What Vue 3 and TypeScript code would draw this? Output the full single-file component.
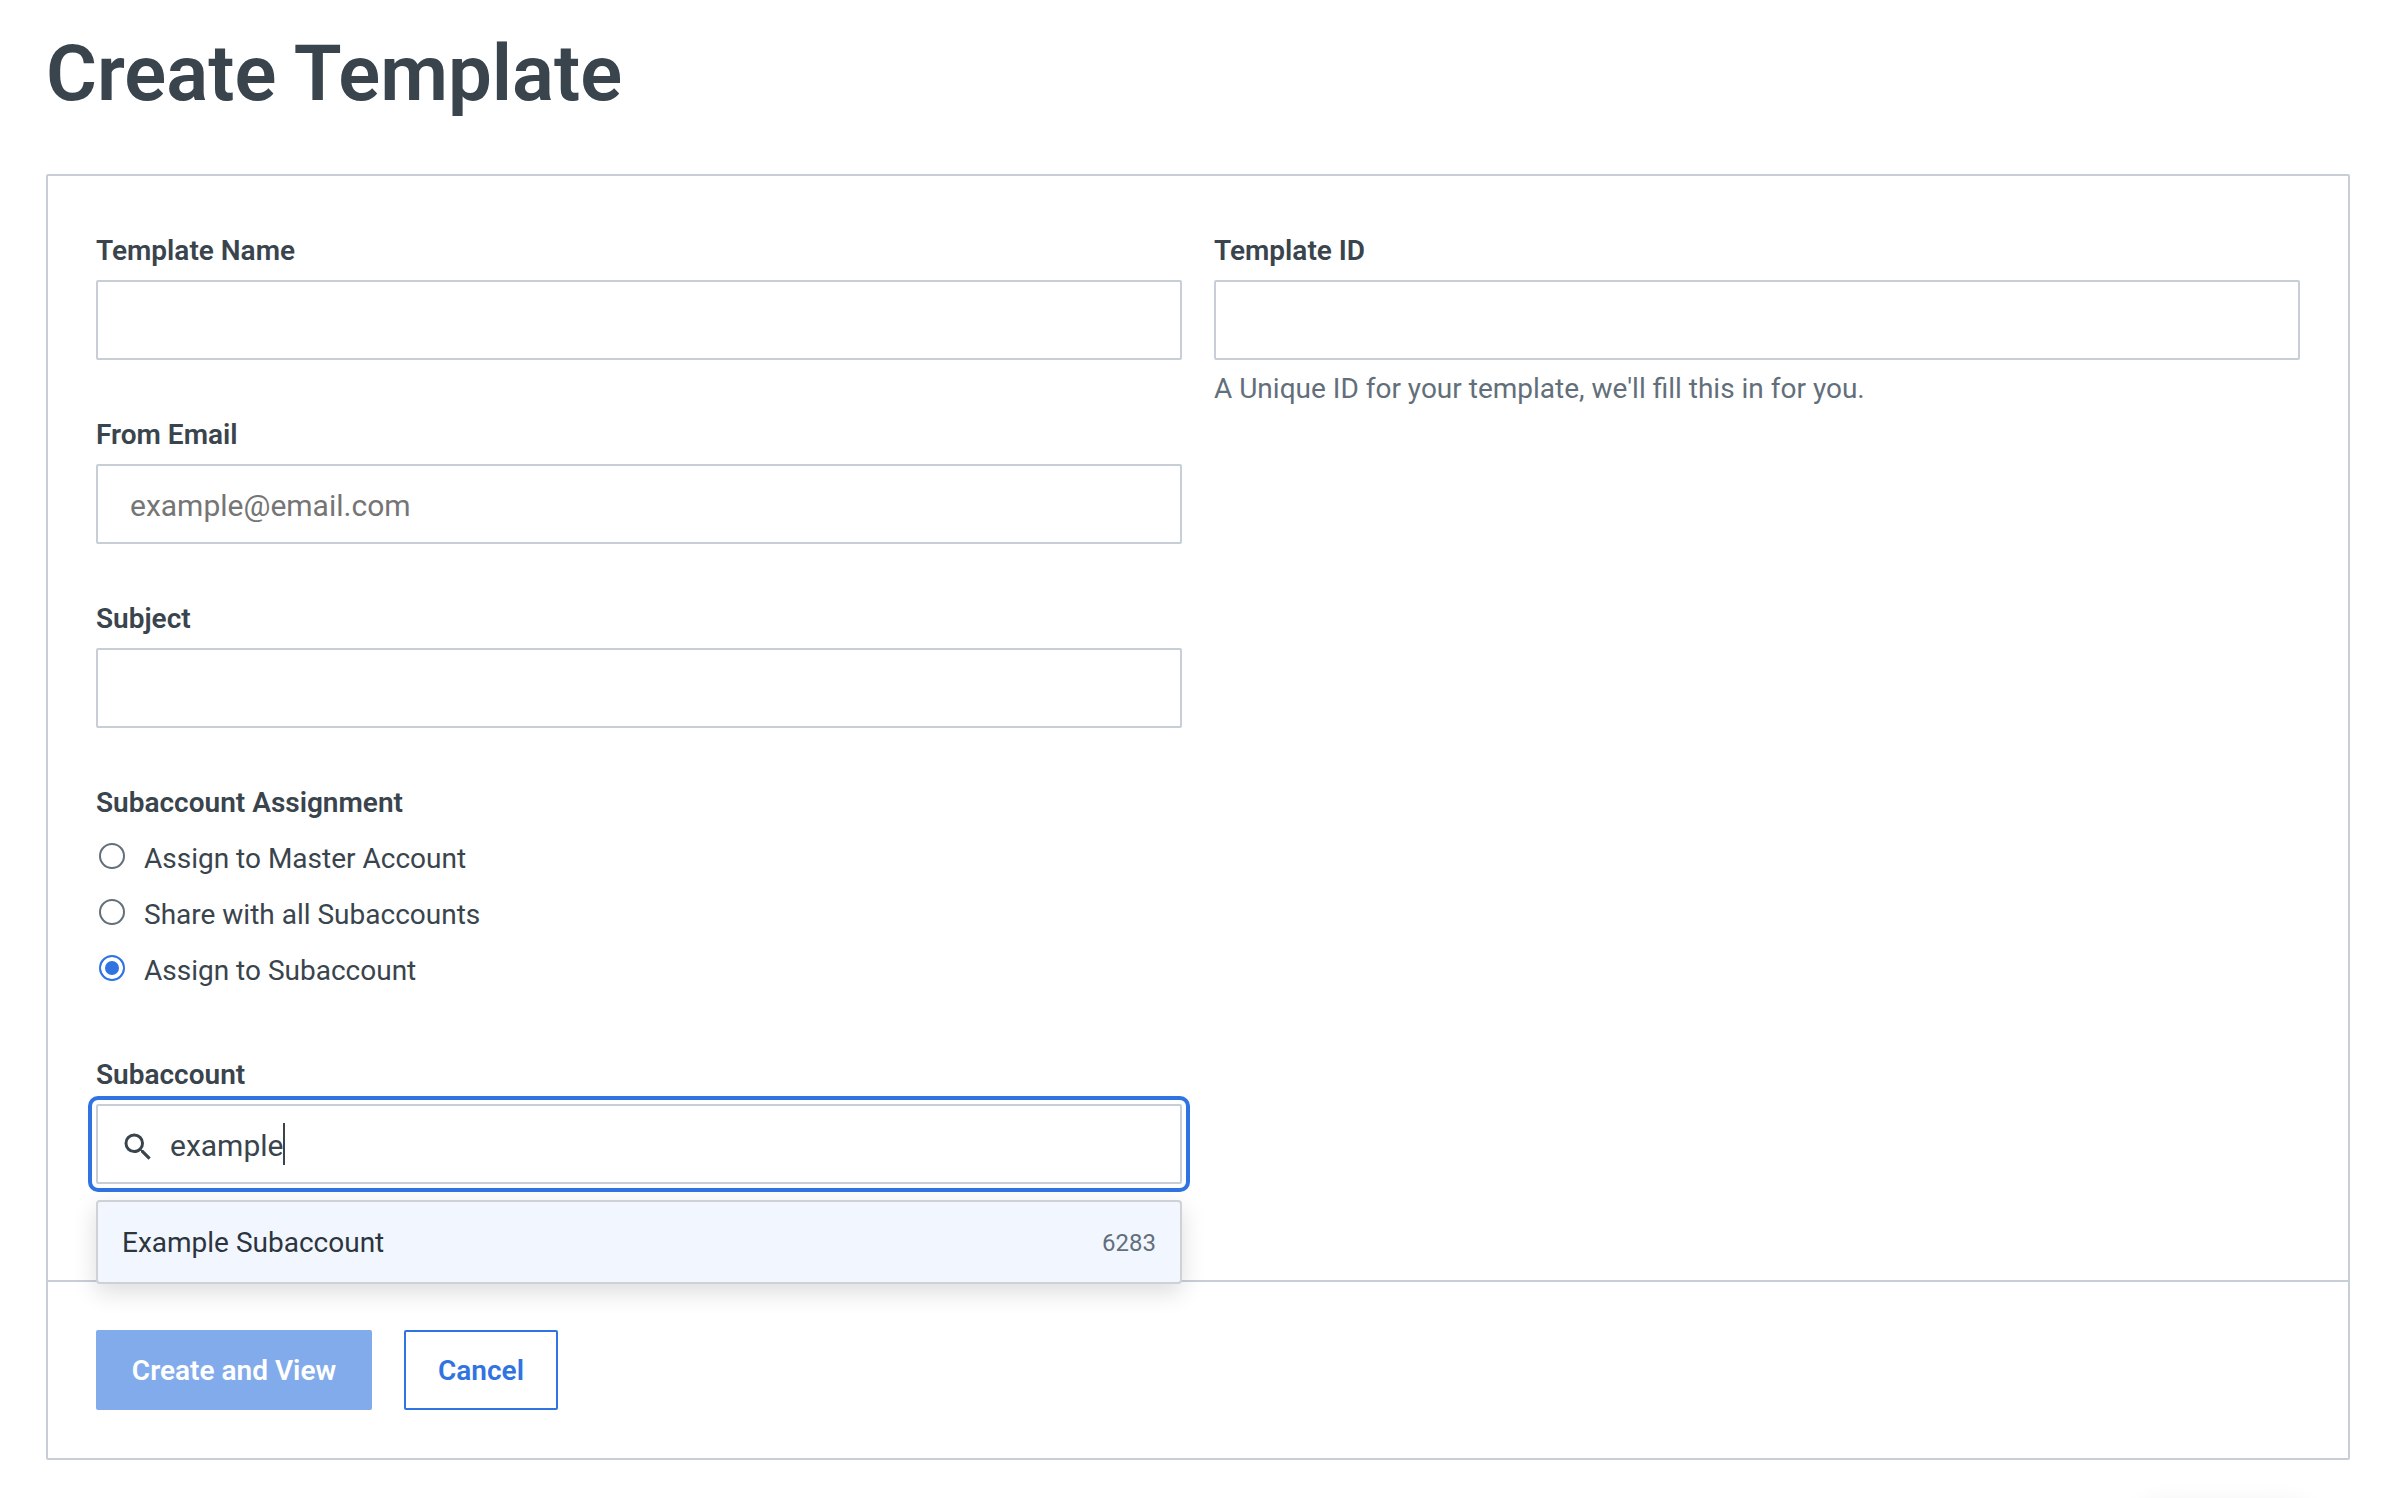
<script setup lang="ts">
import { computed, ref } from 'vue'

interface Assignment {
  value: string
  label: string
}

interface Subaccount {
  id: number
  name: string
}

const assignments: Assignment[] = [
  { value: 'master', label: 'Assign to Master Account' },
  { value: 'shared', label: 'Share with all Subaccounts' },
  { value: 'subaccount', label: 'Assign to Subaccount' },
]

const subaccounts: Subaccount[] = [{ id: 6283, name: 'Example Subaccount' }]

const name = ref('')
const templateId = ref('')
const fromEmail = ref('')
const subject = ref('')
const assignment = ref('subaccount')
const query = ref('example')

const matches = computed(() =>
  subaccounts.filter((s) => s.name.toLowerCase().includes(query.value.toLowerCase())),
)
const canSubmit = computed(() => name.value !== '' && fromEmail.value !== '' && subject.value !== '')
</script>

<template>
  <main class="page">
    <h1 class="title">Create Template</h1>

    <form class="card" @submit.prevent>
      <div class="fields">
        <div class="column">
          <div class="field">
            <label class="label" for="name">Template Name</label>
            <input id="name" v-model="name" class="control" type="text" />
          </div>

          <div class="field">
            <label class="label" for="from">From Email</label>
            <input id="from" v-model="fromEmail" class="control" type="email" placeholder="example@email.com" />
          </div>

          <div class="field">
            <label class="label" for="subject">Subject</label>
            <input id="subject" v-model="subject" class="control" type="text" />
          </div>

          <fieldset class="group">
            <legend class="label">Subaccount Assignment</legend>
            <div class="options">
              <label v-for="a in assignments" :key="a.value" class="option">
                <input v-model="assignment" class="radio" type="radio" name="assignment" :value="a.value" />
                <span>{{ a.label }}</span>
              </label>
            </div>
          </fieldset>

          <div class="field typeahead">
            <label class="label" for="subaccount">Subaccount</label>
            <div class="search">
              <svg class="search-icon" viewBox="0 0 24 24" aria-hidden="true">
                <path
                  fill="currentColor"
                  d="M15.5 14h-.79l-.28-.27A6.47 6.47 0 0 0 16 9.5 6.5 6.5 0 1 0 9.5 16c1.61 0 3.09-.59 4.23-1.57l.27.28v.79l5 4.99L20.49 19l-4.99-5zm-6 0C7.01 14 5 11.99 5 9.5S7.01 5 9.5 5 14 7.01 14 9.5 11.99 14 9.5 14z"
                />
              </svg>
              <input id="subaccount" v-model="query" class="search-input" type="text" autocomplete="off" />
              <span class="caret" aria-hidden="true"></span>
            </div>
            <ul class="menu">
              <li v-for="s in matches" :key="s.id">
                <button class="menu-item" type="button">
                  <span>{{ s.name }}</span>
                  <span class="menu-id">{{ s.id }}</span>
                </button>
              </li>
            </ul>
          </div>
        </div>

        <div class="column">
          <div class="field">
            <label class="label" for="template-id">Template ID</label>
            <input id="template-id" v-model="templateId" class="control" type="text" aria-describedby="id-help" />
            <p id="id-help" class="help">A Unique ID for your template, we'll fill this in for you.</p>
          </div>
        </div>
      </div>

      <div class="actions">
        <button class="button primary" type="submit" :disabled="!canSubmit">Create and View</button>
        <button class="button outline" type="button">Cancel</button>
      </div>
    </form>

    <div class="dock" aria-hidden="true"></div>
  </main>
</template>

<style>
body {
  background: #fff;
}
</style>

<style scoped>
.page {
  padding: 34px 46px 0;
  color: #39444d;
  font-family: Roboto, "Liberation Sans", sans-serif;
  font-size: 28px;
  line-height: 30px;
}

.page * {
  box-sizing: border-box;
}

.title {
  margin: 0 0 60px;
  font-size: 78px;
  line-height: 80px;
  font-weight: 600;
}

.card {
  border: 2px solid #c8ced8;
  border-radius: 2px;
}

.fields {
  display: grid;
  grid-template-columns: 1fr 1fr;
  gap: 32px;
  padding: 60px 48px 96px;
}

.column {
  display: flex;
  flex-direction: column;
  gap: 60px;
}

.field {
  display: flex;
  flex-direction: column;
}

.label {
  margin-bottom: 14px;
  padding: 0;
  font-weight: 600;
}

.control {
  width: 100%;
  height: 80px;
  padding: 2px 32px 0;
  border: 2px solid #c8ced8;
  border-radius: 2px;
  outline: none;
  background: #fff;
  color: inherit;
  font: inherit;
  font-size: 30px;
}

.control::placeholder {
  color: #757575;
  opacity: 1;
}

.help {
  margin: 14px 0 0;
  color: #626f7a;
}

.group {
  margin: 0;
  padding: 0;
  border: 0;
}

.options {
  display: flex;
  flex-direction: column;
  gap: 22px;
  padding: 10px 0 12px;
}

.option {
  display: flex;
  align-items: flex-start;
  gap: 16px;
  line-height: 34px;
}

.radio {
  appearance: none;
  width: 26px;
  height: 26px;
  margin: 1px 3px;
  border: 2px solid #626f7a;
  border-radius: 50%;
  background: #fff;
}

.radio:checked {
  border-color: #2f74e0;
  background: #2f74e0;
  box-shadow: inset 0 0 0 4px #fff;
}

.typeahead {
  position: relative;
}

.search {
  display: flex;
  align-items: center;
  height: 80px;
  padding: 0 22px;
  border: 2px solid #c8ced8;
  border-radius: 2px;
  outline: 4px solid #2f74e0;
  outline-offset: 4px;
}

.search-icon {
  width: 36px;
  height: 36px;
  margin: 6px 14px 0 0;
}

.search-input {
  field-sizing: content;
  height: 76px;
  padding: 2px 0 0;
  border: 0;
  outline: none;
  background: transparent;
  color: inherit;
  caret-color: transparent;
  font: inherit;
  font-size: 30px;
}

.caret {
  width: 2px;
  height: 42px;
  background: #39444d;
}

.menu {
  position: absolute;
  top: 100%;
  right: 0;
  left: 0;
  z-index: 1;
  margin: 16px 0 0;
  padding: 0;
  border: 2px solid #cfd1d6;
  border-radius: 4px;
  background: #f2f7ff;
  box-shadow: 0 8px 24px rgba(0, 0, 0, 0.14);
  list-style: none;
}

.menu-item {
  display: flex;
  align-items: center;
  justify-content: space-between;
  width: 100%;
  height: 80px;
  padding: 2px 24px 0;
  border: 0;
  background: transparent;
  color: #2c353d;
  font: inherit;
}

.menu-id {
  color: #626f7a;
  font-size: 24px;
}

.actions {
  display: flex;
  gap: 32px;
  padding: 48px;
  border-top: 2px solid #c8ced8;
}

.button {
  height: 80px;
  padding: 2px 32px 0;
  border: 2px solid #2f74e0;
  border-radius: 2px;
  font: inherit;
  font-weight: 600;
}

.primary {
  min-width: 276px;
  background: #2f74e0;
  color: #fff;
}

.primary:disabled {
  border-color: #82abec;
  background: #82abec;
}

.outline {
  background: #fff;
  color: #2f74e0;
}

/* Collapsed help dock: only its shadow reaches into the window. */
.dock {
  position: fixed;
  right: 72px;
  bottom: -84px;
  width: 200px;
  height: 80px;
  border-radius: 40px 40px 0 0;
  box-shadow: 0 0 24px rgba(0, 0, 0, 0.06);
}
</style>
